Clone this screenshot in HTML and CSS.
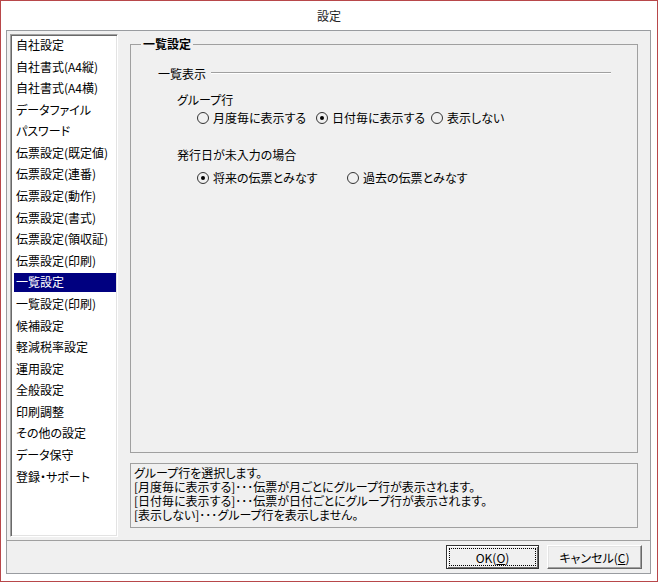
FILE: index.html
```html
<!DOCTYPE HTML>
<html lang="ja">
<head>
    <meta charset="utf-8">
    <title>設定</title>
    <link rel="stylesheet" href="styles.css">
</head>
<body>
    <div class="window">
        <div class="titlebar">設定</div>
        <div class="frame">
            <div class="main">
                <ul class="menu">
                    <li>自社設定</li>
                    <li>自社書式(A4縦)</li>
                    <li>自社書式(A4横)</li>
                    <li>データファイル</li>
                    <li>パスワード</li>
                    <li>伝票設定(既定値)</li>
                    <li>伝票設定(連番)</li>
                    <li>伝票設定(動作)</li>
                    <li>伝票設定(書式)</li>
                    <li>伝票設定(領収証)</li>
                    <li>伝票設定(印刷)</li>
                    <li class="selected">一覧設定</li>
                    <li>一覧設定(印刷)</li>
                    <li>候補設定</li>
                    <li>軽減税率設定</li>
                    <li>運用設定</li>
                    <li>全般設定</li>
                    <li>印刷調整</li>
                    <li>その他の設定</li>
                    <li>データ保守</li>
                    <li>登録・サポート</li>
                </ul>
                <div class="panel">
                    <fieldset class="group">
                        <legend>一覧設定</legend>
                        <div class="section">
                            <span>一覧表示</span>
                            <span class="rule"></span>
                        </div>
                        <div class="caption">グループ行</div>
                        <div class="options options-group">
                            <label class="radio"><span class="dot"></span>月度毎に表示する</label>
                            <label class="radio checked"><span class="dot"></span>日付毎に表示する</label>
                            <label class="radio"><span class="dot"></span>表示しない</label>
                        </div>
                        <div class="caption caption-issue">発行日が未入力の場合</div>
                        <div class="options options-issue">
                            <label class="radio checked"><span class="dot"></span>将来の伝票とみなす</label>
                            <label class="radio"><span class="dot"></span>過去の伝票とみなす</label>
                        </div>
                    </fieldset>
                    <div class="help">
                        <div>グループ行を選択します。</div>
                        <div>[月度毎に表示する]･･･伝票が月ごとにグループ行が表示されます。</div>
                        <div>[日付毎に表示する]･･･伝票が日付ごとにグループ行が表示されます。</div>
                        <div>[表示しない]･･･グループ行を表示しません。</div>
                    </div>
                </div>
            </div>
            <div class="buttons">
                <button class="btn btn-ok">OK(<u>O</u>)</button>
                <button class="btn btn-cancel">キャンセル(<u>C</u>)</button>
            </div>
        </div>
    </div>
</body>
</html>
```

FILE: styles.css
```css
/* Base */
body {
    margin: 0;
    font-family: "Noto Sans CJK JP", "Noto Sans", sans-serif;
    font-size: 12px;
    font-feature-settings: "palt";
    color: #000;
    background: #fff;
}
.window {
    box-sizing: border-box;
    width: 658px;
    height: 582px;
    border: 1px solid #b8474a;
    background: #fff;
    display: flex;
    flex-direction: column;
}
.titlebar {
    height: 29px;
    line-height: 30px;
    text-align: center;
    color: #222;
}
.frame {
    flex: 1;
    margin: 0 6px 7px 5px;
    border: 1px solid #999ca0;
    background: #f0f0f0;
    display: flex;
    flex-direction: column;
}

/* Main area */
.main {
    flex: 1;
    display: flex;
    padding: 3px 0 3px 3px;
    border-bottom: 1px solid #a0a0a0;
}
.menu {
    box-sizing: border-box;
    width: 108px;
    margin: 0;
    padding: 1px;
    list-style: none;
    background: #fff;
    border: 1px solid;
    border-color: #a0a0a0 #fff #fff #a0a0a0;
    box-shadow: inset 1px 1px 0 #696969, inset -1px -1px 0 #e3e3e3;
}
.menu li {
    height: 19px;
    line-height: 17px;
    margin: 0 0 2.58px 2px;
    padding-left: 2px;
    white-space: nowrap;
}
.menu li.selected {
    background: #000080;
    color: #fff;
}

/* Right panel */
.panel {
    flex: 1;
    display: flex;
    flex-direction: column;
    padding: 3px 12px 9px 12px;
}
.group {
    flex: 1;
    min-width: 0;
    margin: 0;
    padding: 14px 0 0 0;
    border: 1px solid #a0a0a0;
}
.group legend {
    margin-left: 10px;
    padding: 0 2px;
    font-weight: bold;
    line-height: 14px;
}
.section {
    display: flex;
    align-items: center;
    height: 16px;
    padding: 0 26px 0 27px;
}
.section .rule {
    flex: 1;
    margin-left: 5px;
    border-top: 1px solid #a0a0a0;
    border-bottom: 1px solid #fff;
}
.caption {
    height: 16px;
    line-height: 16px;
    margin-top: 11px;
    padding-left: 46px;
}
.caption-issue {
    margin-top: 21px;
}
.options {
    display: grid;
    justify-content: start;
    height: 16px;
    margin-top: 2px;
    padding-left: 66px;
}
.options-group {
    grid-template-columns: 119px 115px auto;
}
.options-issue {
    grid-template-columns: 150px auto;
    margin-top: 7px;
}
.radio {
    display: flex;
    align-items: center;
    line-height: 16px;
    white-space: nowrap;
}
.radio .dot {
    box-sizing: border-box;
    width: 12px;
    height: 12px;
    margin-right: 4px;
    border: 1px solid #333;
    border-radius: 50%;
    display: grid;
    place-items: center;
}
.radio.checked .dot::after {
    content: "";
    width: 4px;
    height: 4px;
    border-radius: 50%;
    background: #000;
}
.help {
    box-sizing: border-box;
    height: 65px;
    margin-top: 10px;
    padding: 2px 3px;
    border: 1px solid #a0a0a0;
    line-height: 14px;
    white-space: nowrap;
}

/* Buttons */
.buttons {
    display: flex;
    justify-content: flex-end;
    gap: 8px;
    padding: 4px 8px 4px 0;
}
.btn {
    box-sizing: border-box;
    height: 24px;
    padding: 0;
    font-family: inherit;
    font-size: 12px;
    font-feature-settings: "palt";
    color: #000;
    background: #f0f0f0;
    border: 1px solid;
    border-color: #fff #696969 #696969 #fff;
    box-shadow: inset -1px -1px 0 #a0a0a0, inset 1px 1px 0 #e3e3e3;
}
.btn-ok {
    width: 93px;
    border-color: #333;
    box-shadow: inset 1px 1px 0 #fff, inset -1px -1px 0 #696969;
    outline: 1px dotted #000;
    outline-offset: -4px;
}
.btn-cancel {
    width: 95px;
}
```
